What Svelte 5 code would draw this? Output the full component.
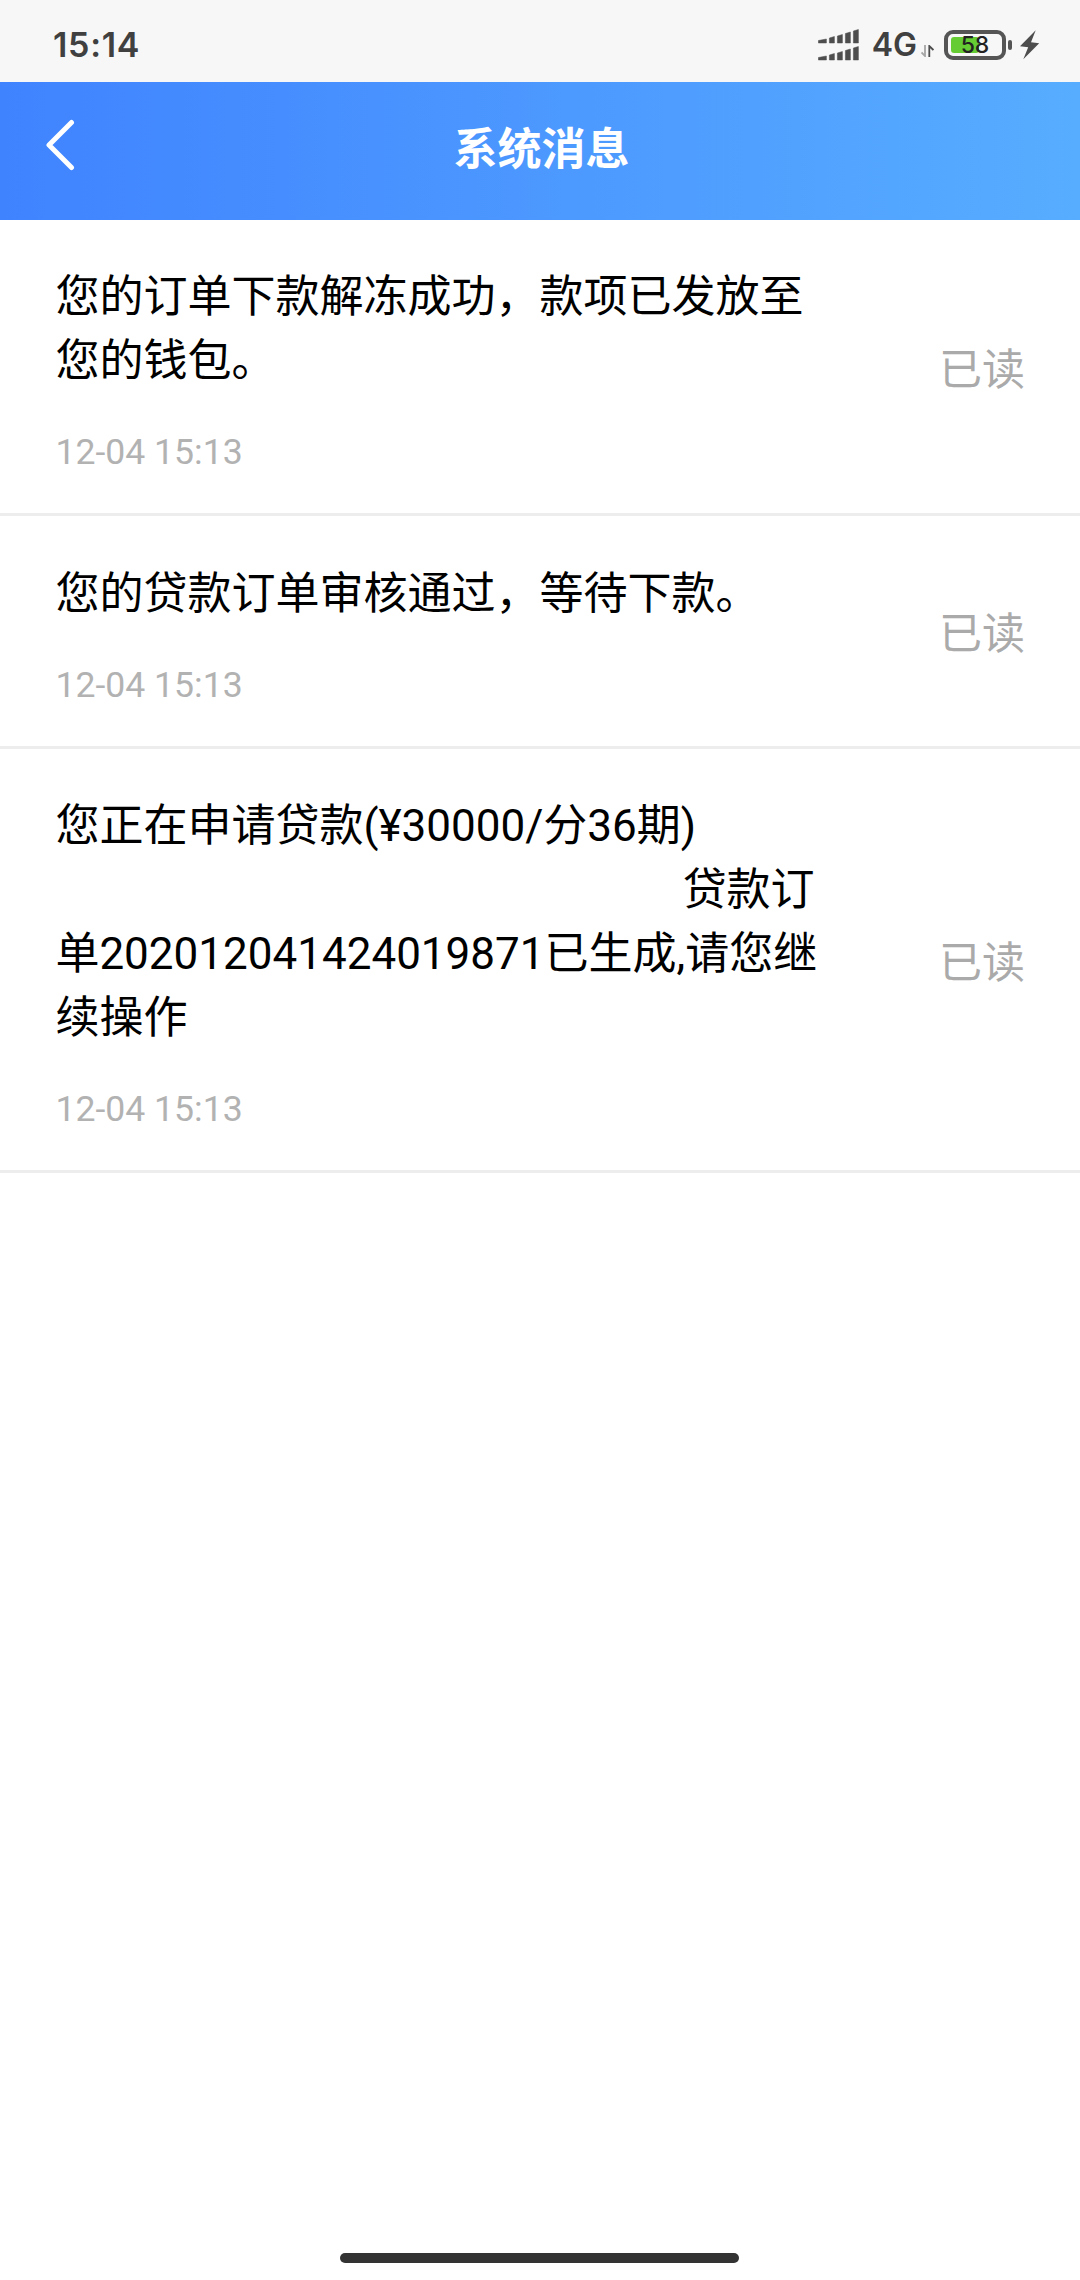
<script lang="ts">
  interface Message { text: string; time: string; read: boolean; }

  const battery = 58;

  const bars = [
    { x: 0, w: 8, h: 4 },
    { x: 11, w: 5, h: 6.5 },
    { x: 19, w: 5, h: 8.5 },
    { x: 27, w: 5, h: 11 },
    { x: 35, w: 5, h: 13.5 },
  ];

  const messages: Message[] = [
    { text: '您的订单下款解冻成功，款项已发放至您的钱包。', time: '12-04 15:13', read: true },
    { text: '您的贷款订单审核通过，等待下款。', time: '12-04 15:13', read: true },
    {
      text: '您正在申请贷款(¥30000/分36期)\n' + ' '.repeat(57) + '贷款订单202012041424019871已生成,请您继续操作',
      time: '12-04 15:13',
      read: true,
    },
  ];
</script>

<div class="screen">
  <div class="status">
    <span class="clock">15:14</span>
    <div class="indicators">
      <svg class="signal" width="41" height="32" viewBox="0 0 41 32" fill="#4d4d4d">
        {#each [14, 31] as base}
          {#each bars as b}
            <path d="M{b.x + 0.4} {base}v{-b.h + 1.5}l{b.w} -1.5v{b.h}z" stroke="#4d4d4d" stroke-width="0.5" stroke-linejoin="round"/>
          {/each}
        {/each}
      </svg>
      <span class="network">4G</span>
      <svg class="data" width="13" height="12" viewBox="0 0 13 12" fill="none" stroke-width="1.8">
        <path d="M4 0V11L0.5 7.5" stroke="#a5a5a5"/>
        <path d="M8.3 12V1L12.4 5" stroke="#4d4d4d"/>
      </svg>
      <div class="battery">
        <div class="level" style="width: {battery * 0.48}px"></div>
        <span class="percent">{battery}</span>
      </div>
      <div class="knob"></div>
      <svg class="bolt" width="20" height="30" viewBox="0 0 20 30" fill="#4d4d4d">
        <path d="M15.7 0.2L0 16.3L8.2 17.3L3.3 29.3L19.2 13.2L11 12.2Z"/>
      </svg>
    </div>
  </div>

  <header class="header">
    <button class="back" aria-label="返回">
      <svg width="30" height="52" viewBox="0 0 30 52" fill="none" stroke="#fff" stroke-width="5" stroke-linecap="round" stroke-linejoin="round">
        <path d="M26.5 3.5L4 26L26.5 48.5"/>
      </svg>
    </button>
    <h1 class="title">系统消息</h1>
  </header>

  <main class="list">
    {#each messages as m}
      <div class="row">
        <div class="content">
          <p class="text">{m.text}</p>
          <time class="time">{m.time}</time>
        </div>
        <span class="state">{m.read ? '已读' : '未读'}</span>
      </div>
    {/each}
  </main>

  <div class="home-bar"></div>
</div>

<style>
  .screen {
    display: flex;
    flex-direction: column;
    width: 1080px;
    height: 2280px;
    background: #fff;
    font-family: Roboto, "Noto Sans CJK SC", sans-serif;
    overflow: hidden;
  }
  .status {
    display: flex;
    align-items: center;
    justify-content: space-between;
    box-sizing: border-box;
    height: 82px;
    padding: 7px 40px 0 53px;
    background: #f7f7f7;
    color: #404040;
    font-family: Inter, sans-serif;
    font-weight: 600;
    flex-shrink: 0;
  }
  .clock {
    font-size: 34px;
    letter-spacing: 0.7px;
  }
  .indicators {
    display: flex;
    align-items: center;
  }
  .network {
    margin-left: 13px;
    font-size: 32px;
  }
  .data {
    margin: 12px 0 0 4px;
  }
  .battery {
    position: relative;
    box-sizing: border-box;
    width: 62px;
    height: 30px;
    margin-left: 10px;
    padding: 3px;
    border: 4px solid #555;
    border-radius: 9px;
  }
  .level {
    height: 16px;
    border-radius: 3px;
    background: #6c3;
  }
  .percent {
    position: absolute;
    inset: 0;
    font-size: 23px;
    font-weight: 500;
    line-height: 23px;
    text-align: center;
    color: #222;
  }
  .knob {
    width: 4px;
    height: 10px;
    margin-left: 2px;
    border-radius: 2px;
    background: #555;
  }
  .bolt {
    margin-left: 8px;
  }
  .header {
    display: grid;
    grid-template-columns: 120px 1fr 117px;
    align-items: center;
    height: 138px;
    background: linear-gradient(90deg, #4083ff, #57adff);
    flex-shrink: 0;
  }
  .back {
    display: flex;
    padding: 0 0 12px 45px;
    border: none;
    background: none;
  }
  .title {
    margin: 0;
    padding-bottom: 3px;
    font-size: 44px;
    font-weight: 700;
    line-height: 64px;
    text-align: center;
    color: #fff;
  }
  .list {
    flex: 1;
  }
  .row {
    display: flex;
    align-items: center;
    justify-content: space-between;
    padding: 46.3px 55px 40px 55.4px;
    border-bottom: 3px solid #ededed;
  }
  .content {
    width: 770px;
  }
  .text {
    margin: 0;
    font-size: 44px;
    line-height: 63.8px;
    word-spacing: 0.09px;
    white-space: pre-wrap;
    color: #000;
  }
  .time {
    display: block;
    margin-top: 37px;
    font-size: 35.6px;
    line-height: 42.6px;
    color: #b2b2b2;
  }
  .state {
    font-size: 43px;
    line-height: 60px;
    color: #aaa;
  }
  .home-bar {
    width: 399px;
    height: 10px;
    margin: 0 0 17px 340px;
    border-radius: 5px;
    background: #333;
  }
</style>
